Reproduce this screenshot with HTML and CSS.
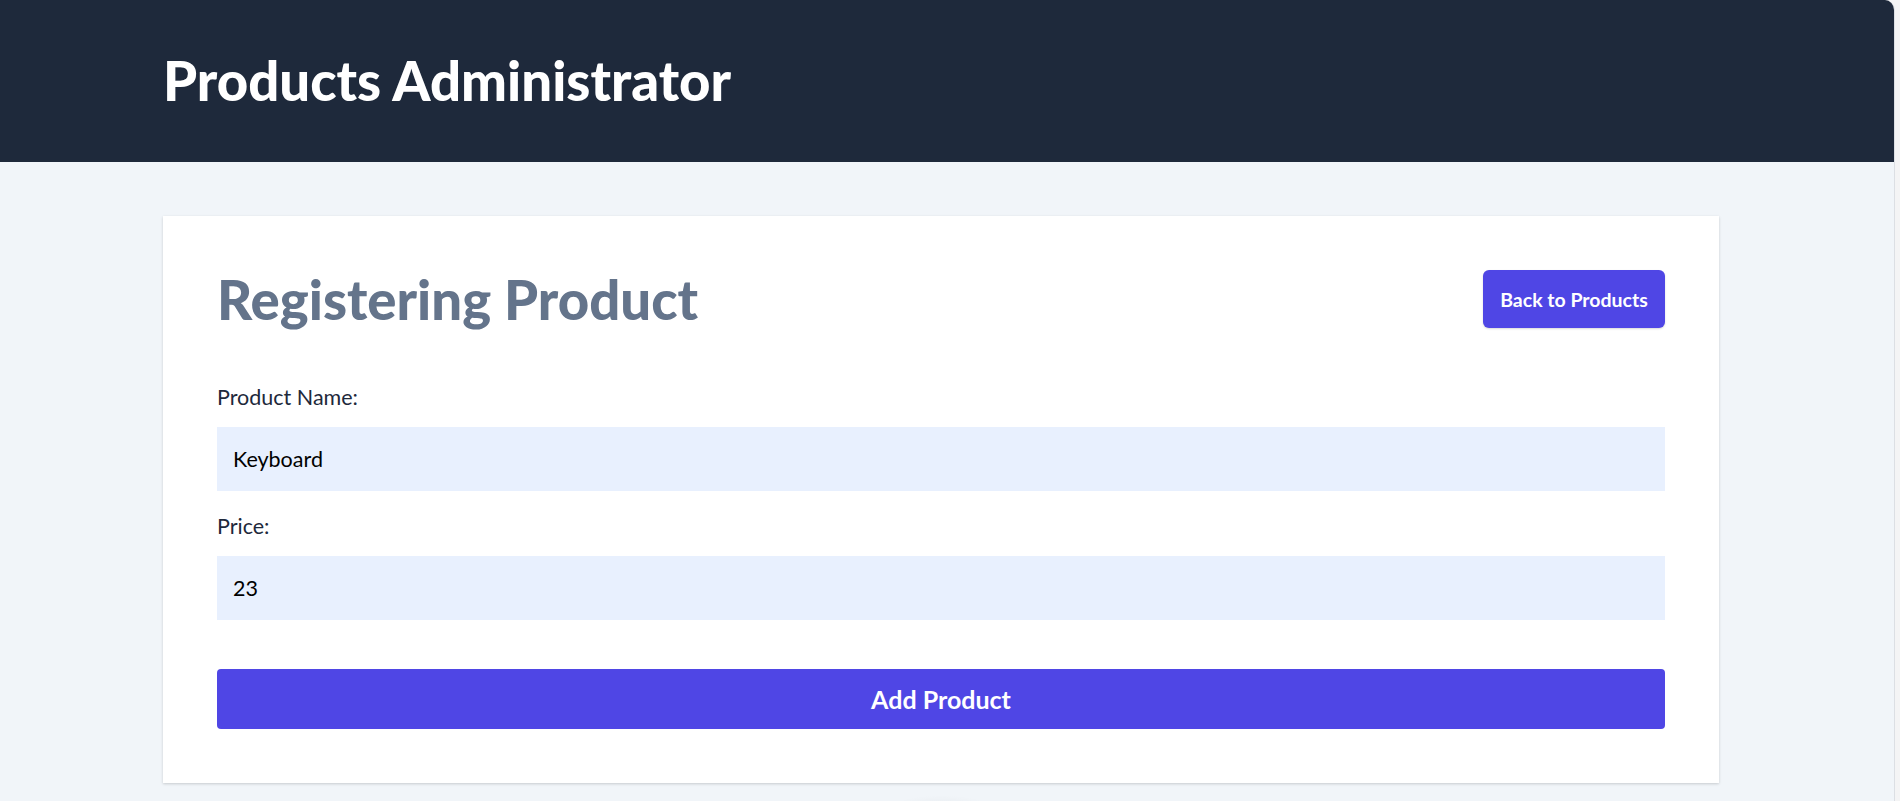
FILE: index.html
```html
<!DOCTYPE html>
<html lang="en">
<head>
<meta charset="utf-8">
<title>Products Administrator</title>
<link rel="stylesheet" href="styles.css">
</head>
<body>
<div class="app">
  <header class="topbar">
    <div class="container">
      <h1 class="brand">Products Administrator</h1>
    </div>
  </header>
  <main class="container">
    <section class="card">
      <div class="card-head">
        <h2 class="title">Registering Product</h2>
        <a class="btn-back" href="#">Back to Products</a>
      </div>
      <form class="form">
        <div class="field">
          <label class="label" for="name">Product Name:</label>
          <input class="input" id="name" type="text" value="Keyboard">
        </div>
        <div class="field">
          <label class="label" for="price">Price:</label>
          <input class="input" id="price" type="text" value="23">
        </div>
        <button class="btn-submit" type="button">Add Product</button>
      </form>
    </section>
    <div class="blob"></div>
  </main>
</div>
</body>
</html>
```
FILE: styles.css
```css
html, body {
  margin: 0;
  padding: 0;
  height: 100%;
  overflow: hidden;
}
body {
  background: #f4f4f5;
  font-family: Lato, "Liberation Sans", sans-serif;
}
.app {
  margin-right: 5px;
  min-height: 100%;
  background: #f1f5f9;
  border-top-right-radius: 10px;
  border-right: 1px solid #dcdfe4;
  overflow: hidden;
}
.container {
  width: 1556px;
  margin-left: 163px;
}
.topbar {
  background: #1e293b;
  height: 162px;
  display: flex;
  align-items: center;
}
.brand {
  margin: 0;
  color: #ffffff;
  font-size: 54.5px;
  font-weight: 900;
  line-height: 1;
  padding-bottom: 1px;
}
main.container {
  padding-top: 54px;
}
.card {
  background: #ffffff;
  padding: 54px;
  box-shadow: 0 1px 3px rgba(0, 0, 0, 0.12), 0 1px 2px rgba(0, 0, 0, 0.06);
}
.card-head {
  display: flex;
  justify-content: space-between;
  align-items: center;
  height: 58px;
}
.title {
  margin: 0;
  color: #64748b;
  font-size: 54.5px;
  font-weight: 900;
  line-height: 1;
}
.btn-back {
  display: flex;
  align-items: center;
  justify-content: center;
  width: 182px;
  height: 58px;
  box-sizing: border-box;
  background: #4f46e5;
  color: #ffffff;
  font-size: 19.5px;
  font-weight: 700;
  text-decoration: none;
  border-radius: 6px;
  box-shadow: 0 1px 2px rgba(0, 0, 0, 0.15);
}
.form {
  display: flex;
  flex-direction: column;
  gap: 20px;
  margin-top: 54px;
}
.field {
  display: flex;
  flex-direction: column;
}
.label {
  color: #1e293b;
  font-size: 21.5px;
  line-height: 30px;
  margin-bottom: 15px;
}
.input {
  height: 64px;
  box-sizing: border-box;
  border: none;
  outline: none;
  background: #e8f0fe;
  padding: 0 16px;
  font-family: Lato, "Liberation Sans", sans-serif;
  font-size: 21.5px;
  color: #000000;
}
.btn-submit {
  margin-top: 29px;
  height: 60px;
  border: none;
  border-radius: 4px;
  background: #4f46e5;
  color: #ffffff;
  font-family: Lato, "Liberation Sans", sans-serif;
  font-size: 25px;
  font-weight: 700;
  cursor: pointer;
}
.blob {
  width: 110px;
  height: 30px;
  margin: 12px auto 0;
  border-radius: 50%;
  background: radial-gradient(ellipse at center, rgba(0, 0, 0, 0.045), rgba(0, 0, 0, 0) 70%);
}
```
